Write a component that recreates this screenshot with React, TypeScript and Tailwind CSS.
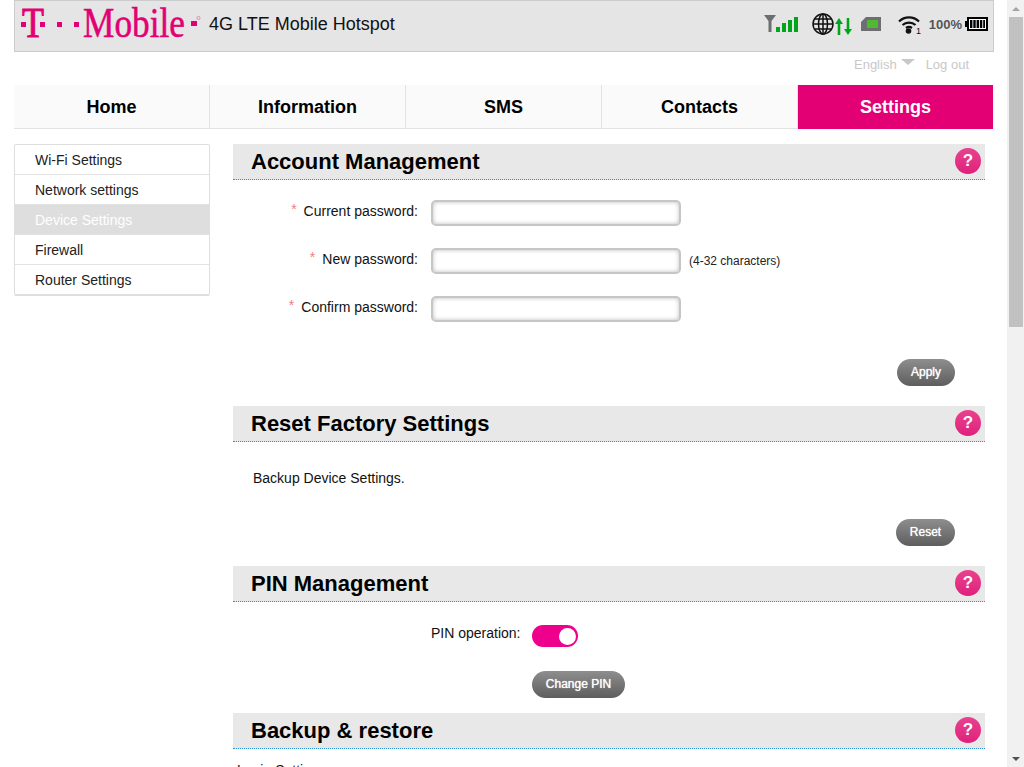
import { ReactNode } from "react";

const navItems = ["Home", "Information", "SMS", "Contacts", "Settings"];
const sideItems = ["Wi-Fi Settings", "Network settings", "Device Settings", "Firewall", "Router Settings"];

function Logo() {
    return (
        <svg width="182" height="50" viewBox="0 0 182 50" className="shrink-0 text-[#e20074]" fill="currentColor">
            <text x="1" y="36" fontFamily="'Liberation Serif', serif" fontSize="42" stroke="currentColor" strokeWidth="1" textLength="22" lengthAdjust="spacingAndGlyphs">T</text>
            <rect x="0" y="21" width="5" height="5" />
            <rect x="19" y="21" width="5" height="5" />
            <rect x="36" y="21" width="5" height="5" />
            <rect x="53" y="21" width="5" height="5" />
            <text x="62" y="36" fontFamily="'Liberation Serif', serif" fontSize="42" stroke="currentColor" strokeWidth="0.5" textLength="102" lengthAdjust="spacingAndGlyphs">Mobile</text>
            <rect x="170" y="20" width="6" height="5" />
            <circle cx="177.5" cy="17" r="1.6" fill="none" stroke="currentColor" strokeWidth="0.6" opacity="0.6" />
        </svg>
    );
}

function SignalIcon() {
    return (
        <svg width="34" height="20" viewBox="0 0 34 20" className="shrink-0">
            <path d="M0 1h12L7.5 7v11h-3V7z" fill="#6d6e71" />
            <rect x="12" y="13" width="4" height="5" fill="#00a51c" />
            <rect x="18" y="9" width="4" height="9" fill="#00a51c" />
            <rect x="24" y="6" width="4" height="12" fill="#00a51c" />
            <rect x="30" y="3" width="4" height="15" fill="#00a51c" />
        </svg>
    );
}

function GlobeIcon() {
    return (
        <svg width="22" height="22" viewBox="0 0 22 22" className="shrink-0" fill="none" stroke="#111" strokeWidth="1.5">
            <circle cx="11" cy="11" r="10" />
            <ellipse cx="11" cy="11" rx="4.5" ry="10" />
            <path d="M11 1v20M1 11h20M2.5 6h17M2.5 16h17" />
        </svg>
    );
}

function ArrowsIcon() {
    return (
        <svg width="17" height="17" viewBox="0 0 17 17" className="shrink-0" fill="#00a51c">
            <path d="M4 0l4 6H5.3v11H2.7V6H0z" />
            <path d="M13 17l-4-6h2.7V0h2.6v11H17z" />
        </svg>
    );
}

function SimIcon() {
    return (
        <svg width="20" height="14" viewBox="0 0 20 14" className="shrink-0">
            <path d="M5 0h15v14H0V5z" fill="#6d6e71" />
            <rect x="6" y="3" width="11" height="8" fill="#4fb92f" />
        </svg>
    );
}

function WifiIcon() {
    return (
        <svg width="23" height="19" viewBox="0 0 23 19" className="shrink-0 overflow-visible">
            <g fill="none" stroke="#111" strokeWidth="2.2">
                <path d="M1 6.5C6.5 1 15.5 1 21 6.5" />
                <path d="M4.5 10C8 6.8 14 6.8 17.5 10" />
                <path d="M8 13C9.8 11.7 12.2 11.7 14 13" />
            </g>
            <circle cx="10.5" cy="16" r="2.8" fill="#111" />
            <text x="18" y="19" fontSize="9" fontFamily="'Liberation Sans', sans-serif" fill="#111">1</text>
        </svg>
    );
}

function BatteryIcon() {
    return (
        <svg width="23" height="14" viewBox="0 0 23 14" className="shrink-0">
            <rect x="0" y="4" width="2" height="6" fill="#000" />
            <rect x="2" y="0" width="21" height="14" fill="#000" />
            <rect x="4" y="2" width="17" height="10" fill="#fff" />
            <rect x="5" y="3" width="2.4" height="8" fill="#000" />
            <rect x="8.3" y="3" width="2.4" height="8" fill="#000" />
            <rect x="11.6" y="3" width="2.4" height="8" fill="#000" />
            <rect x="14.9" y="3" width="2.4" height="8" fill="#000" />
            <rect x="18.2" y="3" width="1.8" height="8" fill="#000" />
        </svg>
    );
}

function SectionHeader({ title }: { title: string }) {
    return (
        <div className="flex h-9 items-center justify-between border-b border-dotted border-b-[#2b8fd8] bg-[#e8e8e8] pl-[18px] pr-1">
            <h2 className="text-[22px] font-bold text-black">{title}</h2>
            <div className="flex h-[26px] w-[26px] -translate-y-px items-center justify-center rounded-full bg-gradient-to-b from-[#e8418f] to-[#df1f7c] text-[17px] font-bold text-white">
                ?
            </div>
        </div>
    );
}

function PasswordRow({ label, hint, className }: { label: string; hint?: ReactNode; className?: string }) {
    return (
        <div className={"flex items-center " + (className || "")}>
            <label className="w-[185px] -translate-y-0.5 text-right text-sm text-[#111]">
                <span className="relative -top-0.5 mr-[7px] text-[#f47c7c]">*</span>
                {label}
            </label>
            <input
                type="text"
                className="ml-[13px] h-[26px] w-[250px] rounded-[5px] border-2 border-[#c6c6c6] bg-white shadow-[inset_0_0_4px_#bbb]"
            />
            {hint}
        </div>
    );
}

function GreyButton({ label, className }: { label: string; className?: string }) {
    return (
        <button className={"h-[27px] rounded-[14px] bg-gradient-to-b from-[#8e8e8e] to-[#5e5e5e] pb-px text-xs text-white [text-shadow:0_0_1px_#fff] " + (className || "")}>
            {label}
        </button>
    );
}

function Scrollbar() {
    return (
        <div className="flex h-full w-[17px] shrink-0 flex-col bg-[#f1f1f1]">
            <div className="flex h-[17px] items-center justify-center">
                <div className="h-0 w-0 border-x-[4px] border-b-[4px] border-x-transparent border-b-[#a3a3a3]" />
            </div>
            <div className="ml-[2px] h-[310px] w-[14px] bg-[#c1c1c1]" />
            <div className="flex-1" />
            <div className="flex h-[17px] items-center justify-center">
                <div className="h-0 w-0 border-x-[4px] border-t-[4px] border-x-transparent border-t-[#505050]" />
            </div>
        </div>
    );
}

export default function App() {
    return (
        <div className="flex h-[767px] w-[1024px] overflow-hidden bg-white font-['Liberation_Sans',Arial,sans-serif]">
            <div className="w-[1007px] shrink-0 overflow-hidden pl-[14px] pr-[13px]">
                <header className="flex h-[52px] items-center border border-[#cccccc] bg-[#e5e5e5] pl-[6px]">
                    <Logo />
                    <span className="ml-[6px] -translate-y-0.5 text-lg text-[#111]">4G LTE Mobile Hotspot</span>
                    <div className="ml-auto flex -translate-y-0.5 items-center pr-[5px]">
                        <SignalIcon />
                        <div className="ml-[14px]"><GlobeIcon /></div>
                        <div className="ml-[1px] mt-[5px]"><ArrowsIcon /></div>
                        <div className="ml-[9px]"><SimIcon /></div>
                        <div className="ml-[17px]"><WifiIcon /></div>
                        <span className="ml-[8px] translate-y-px text-[13px] font-bold text-[#555]">100%</span>
                        <div className="ml-[3px]"><BatteryIcon /></div>
                    </div>
                </header>

                <div className="flex h-[33px] items-start justify-end pr-[25px] pt-[3px] text-[13px] text-[#c8c8c8]">
                    <span>English</span>
                    <span className="ml-[4px] mt-[4px] h-0 w-0 border-x-[7px] border-t-[6px] border-x-transparent border-t-[#c8c8c8]" />
                    <span className="ml-[11px]">Log out</span>
                </div>

                <nav className="flex h-11 w-[980px]">
                    {navItems.map((item) => (
                        <a
                            key={item}
                            className={
                                item === "Settings"
                                    ? "flex w-[195px] items-center justify-center bg-[#e20074] text-lg font-bold text-white"
                                    : "flex w-[196px] items-center justify-center border-r border-b border-[#e3e3e3] bg-[#fafafa] text-lg font-bold text-black"
                            }
                        >
                            {item}
                        </a>
                    ))}
                </nav>

                <div className="mt-[15px] flex">
                    <aside className="h-[152px] w-[196px] shrink-0 rounded-[2px] border border-b-2 border-[#dedede]">
                        {sideItems.map((item, i) => (
                            <div
                                key={item}
                                className={
                                    "flex h-[30px] items-center pl-5 text-sm " +
                                    (item === "Device Settings" ? "bg-[#dedede] text-white " : "text-[#222] ") +
                                    (i < sideItems.length - 1 ? "border-b border-[#e3e3e3]" : "")
                                }
                            >
                                {item}
                            </div>
                        ))}
                    </aside>

                    <main className="ml-[23px] w-[752px] shrink-0">
                        <SectionHeader title="Account Management" />
                        <div className="mt-5">
                            <PasswordRow label="Current password:" />
                            <PasswordRow
                                label="New password:"
                                className="mt-[22px]"
                                hint={<span className="ml-2 text-xs text-[#222]">(4-32 characters)</span>}
                            />
                            <PasswordRow label="Confirm password:" className="mt-[22px]" />
                        </div>
                        <div className="mt-[37px] flex justify-end pr-[30px]">
                            <GreyButton label="Apply" className="w-[58px]" />
                        </div>

                        <div className="mt-5">
                            <SectionHeader title="Reset Factory Settings" />
                        </div>
                        <p className="ml-5 mt-[26px] text-sm text-[#111]">Backup Device Settings.</p>
                        <div className="mt-[31px] flex justify-end pr-[30px]">
                            <GreyButton label="Reset" className="w-[59px]" />
                        </div>

                        <div className="mt-5">
                            <SectionHeader title="PIN Management" />
                        </div>
                        <div className="mt-[23px] flex items-center">
                            <span className="ml-[198px] w-[89px] -translate-y-[3px] whitespace-nowrap text-sm text-[#111]">PIN operation:</span>
                            <div className="ml-[12px] flex h-[22px] w-[46px] items-center justify-end rounded-full bg-[#ee008c] pr-[2px]">
                                <div className="h-[17px] w-[17px] rounded-full bg-white" />
                            </div>
                        </div>
                        <div className="ml-[299px] mt-6">
                            <GreyButton label="Change PIN" className="w-[93px]" />
                        </div>

                        <div className="mt-[15px]">
                            <SectionHeader title="Backup & restore" />
                        </div>
                        <p className="ml-[4px] mt-[11px] text-sm text-[#111]">Login Settings</p>
                    </main>
                </div>
            </div>
            <Scrollbar />
        </div>
    );
}
